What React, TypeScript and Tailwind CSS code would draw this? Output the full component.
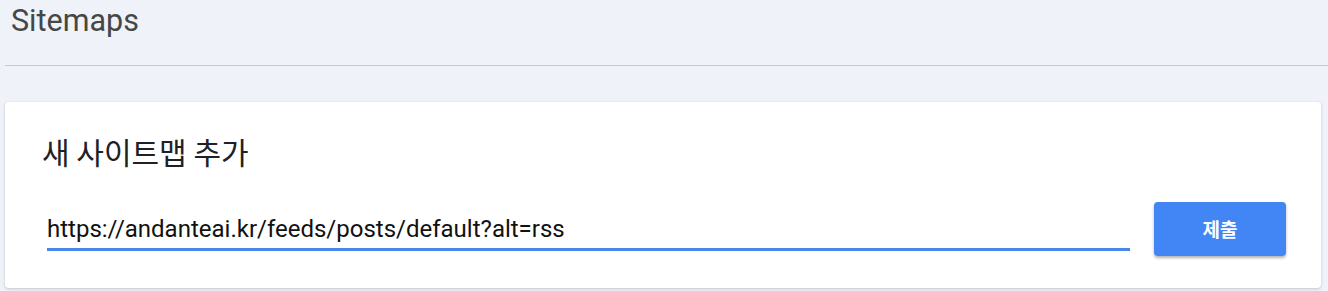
export default function App() {
  return (
    <div className="w-[1328px] h-[291px] overflow-hidden bg-[#eff2f8]" style={{ fontFamily: 'Roboto, "Noto Sans CJK KR", sans-serif' }}>
      {/* Page header */}
      <div className="h-[65px] pl-[11px] pt-[1px]">
        <h1 className="text-[30.5px] leading-[40px] text-[#444746]" style={{ fontFamily: 'Roboto, sans-serif' }}>Sitemaps</h1>
      </div>
      <div className="ml-[5px] h-px bg-[#c7c9cc]" />

      {/* Add sitemap card */}
      <div className="mt-[36px] ml-[5px] mr-[7px] rounded-[4px] bg-white shadow-[0_1px_3px_rgba(60,64,67,0.25)] pl-[37px] pr-[35px] pt-[29px] pb-[37px]">
        <h2 className="text-[30px] leading-[40px] text-[#202124]" style={{ fontFamily: '"Noto Sans CJK KR", sans-serif' }}>새 사이트맵 추가</h2>
        <div className="mt-[31px] flex items-end">
          <div className="ml-[5px] w-[1083px] border-b-[3px] border-[#4a86e8] pb-[4px]">
            <div className="text-[24px] leading-[30px] text-[#111]">https://andanteai.kr/feeds/posts/default?alt=rss</div>
          </div>
          <button className="ml-[24px] mb-[-5px] w-[132px] h-[54px] rounded-[4px] bg-[#4285f4] text-white text-[19px] font-bold shadow-[0_2px_3px_rgba(0,0,0,0.3)]" style={{ fontFamily: '"Noto Sans CJK KR", sans-serif' }}>
            제출
          </button>
        </div>
      </div>
    </div>
  );
}
